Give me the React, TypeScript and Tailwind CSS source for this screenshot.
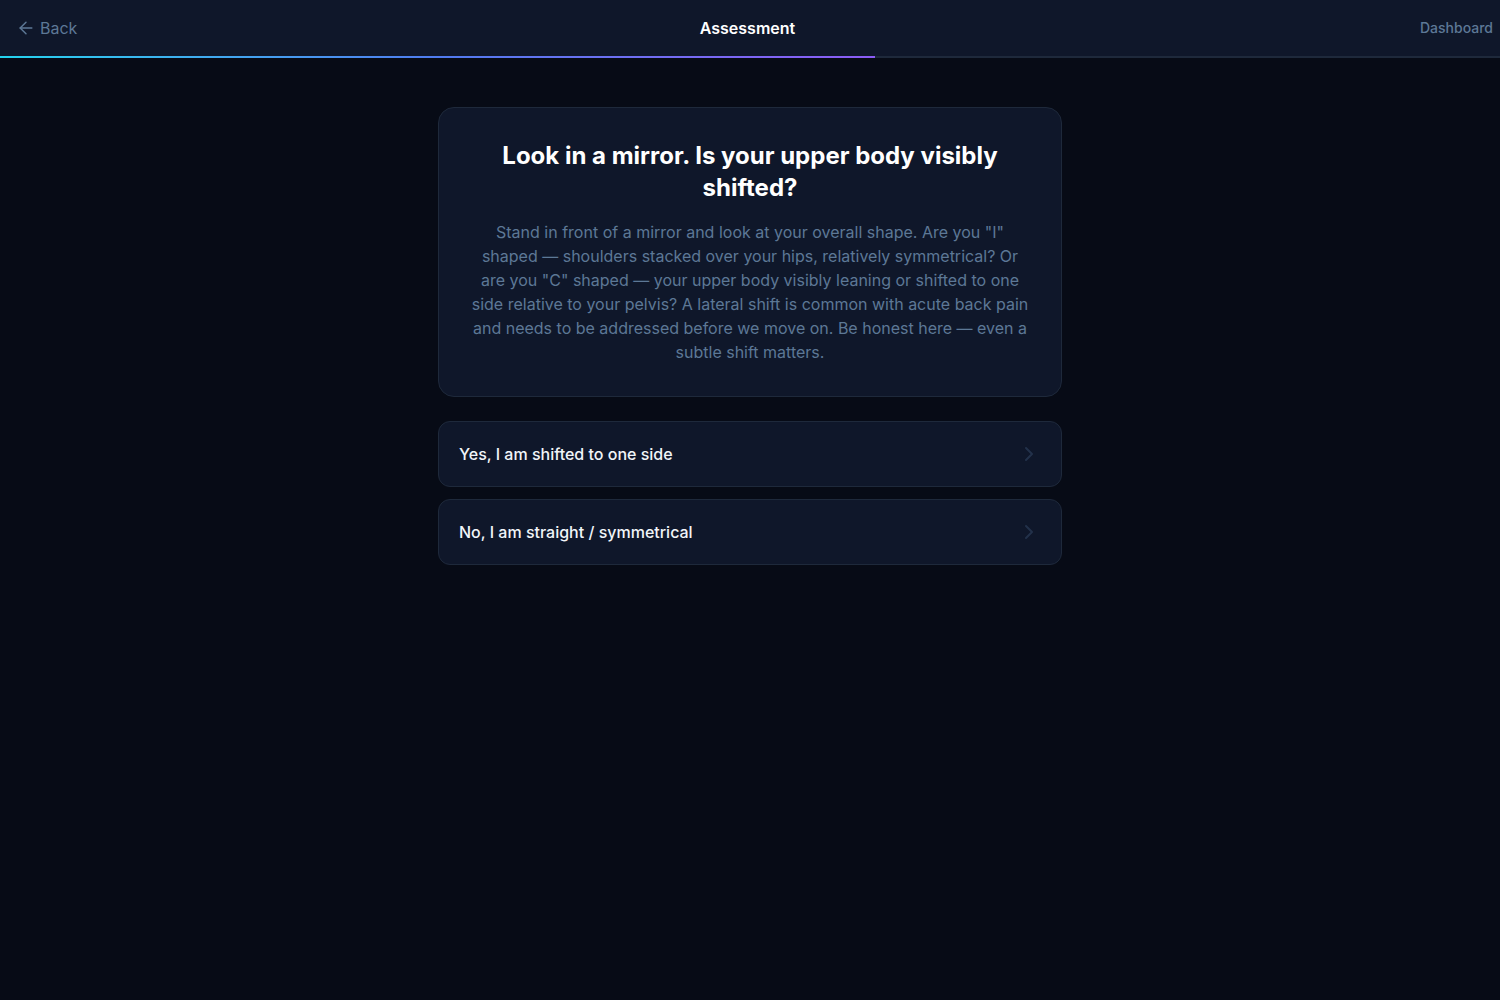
import { ArrowLeft, ChevronRight } from "lucide-react";

const options = ["Yes, I am shifted to one side", "No, I am straight / symmetrical"];

const App = () => {
  return (
    <div className="min-h-screen bg-[#070b16] font-['Inter',sans-serif] text-slate-100">
      <header className="bg-[#0f172a]">
        <div className="grid h-14 grid-cols-3 items-center px-[7px]">
          <button className="ml-[9px] flex items-center gap-1 justify-self-start text-base text-[#5d7896]">
            <ArrowLeft size={20} strokeWidth={1.75} />
            <span>Back</span>
          </button>
          <div className="mr-[5px] justify-self-center text-base font-semibold text-white">Assessment</div>
          <button className="justify-self-end text-sm font-medium text-[#5d7896]">Dashboard</button>
        </div>
        <div className="h-[2px] w-full bg-[#1e293b]">
          <div
            className="h-full bg-gradient-to-r from-[#22d3ee] via-[#4f7bf0] to-[#8b5cf6]"
            style={{ width: `${(7 / 12) * 100}%` }}
          />
        </div>
      </header>

      <main className="mx-auto max-w-2xl px-6 pt-[49px] pb-12">
        {/* Question */}
        <div className="rounded-2xl border border-[#1e293b] bg-[#0f172a] p-8 text-center">
          <h1 className="text-2xl leading-8 font-bold text-white">
            Look in a mirror. Is your upper body visibly shifted?
          </h1>
          <p className="mt-4 text-base leading-6 text-[#5d7896]">
            Stand in front of a mirror and look at your overall shape. Are you "I" shaped — shoulders stacked over your
            hips, relatively symmetrical? Or are you "C" shaped — your upper body visibly leaning or shifted to one side
            relative to your pelvis? A lateral shift is common with acute back pain and needs to be addressed before we
            move on. Be honest here — even a subtle shift matters.
          </p>
        </div>

        {/* Answers */}
        <div className="mt-6 flex flex-col gap-3">
          {options.map((label) => (
            <button
              key={label}
              className="flex items-center justify-between rounded-xl border border-[#1e293b] bg-[#0f172a] px-5 py-5 text-left"
            >
              <span className="text-base leading-6 font-medium text-slate-100">{label}</span>
              <ChevronRight size={24} strokeWidth={2} className="text-[#22314a]" />
            </button>
          ))}
        </div>
      </main>
    </div>
  );
};

export default App;
